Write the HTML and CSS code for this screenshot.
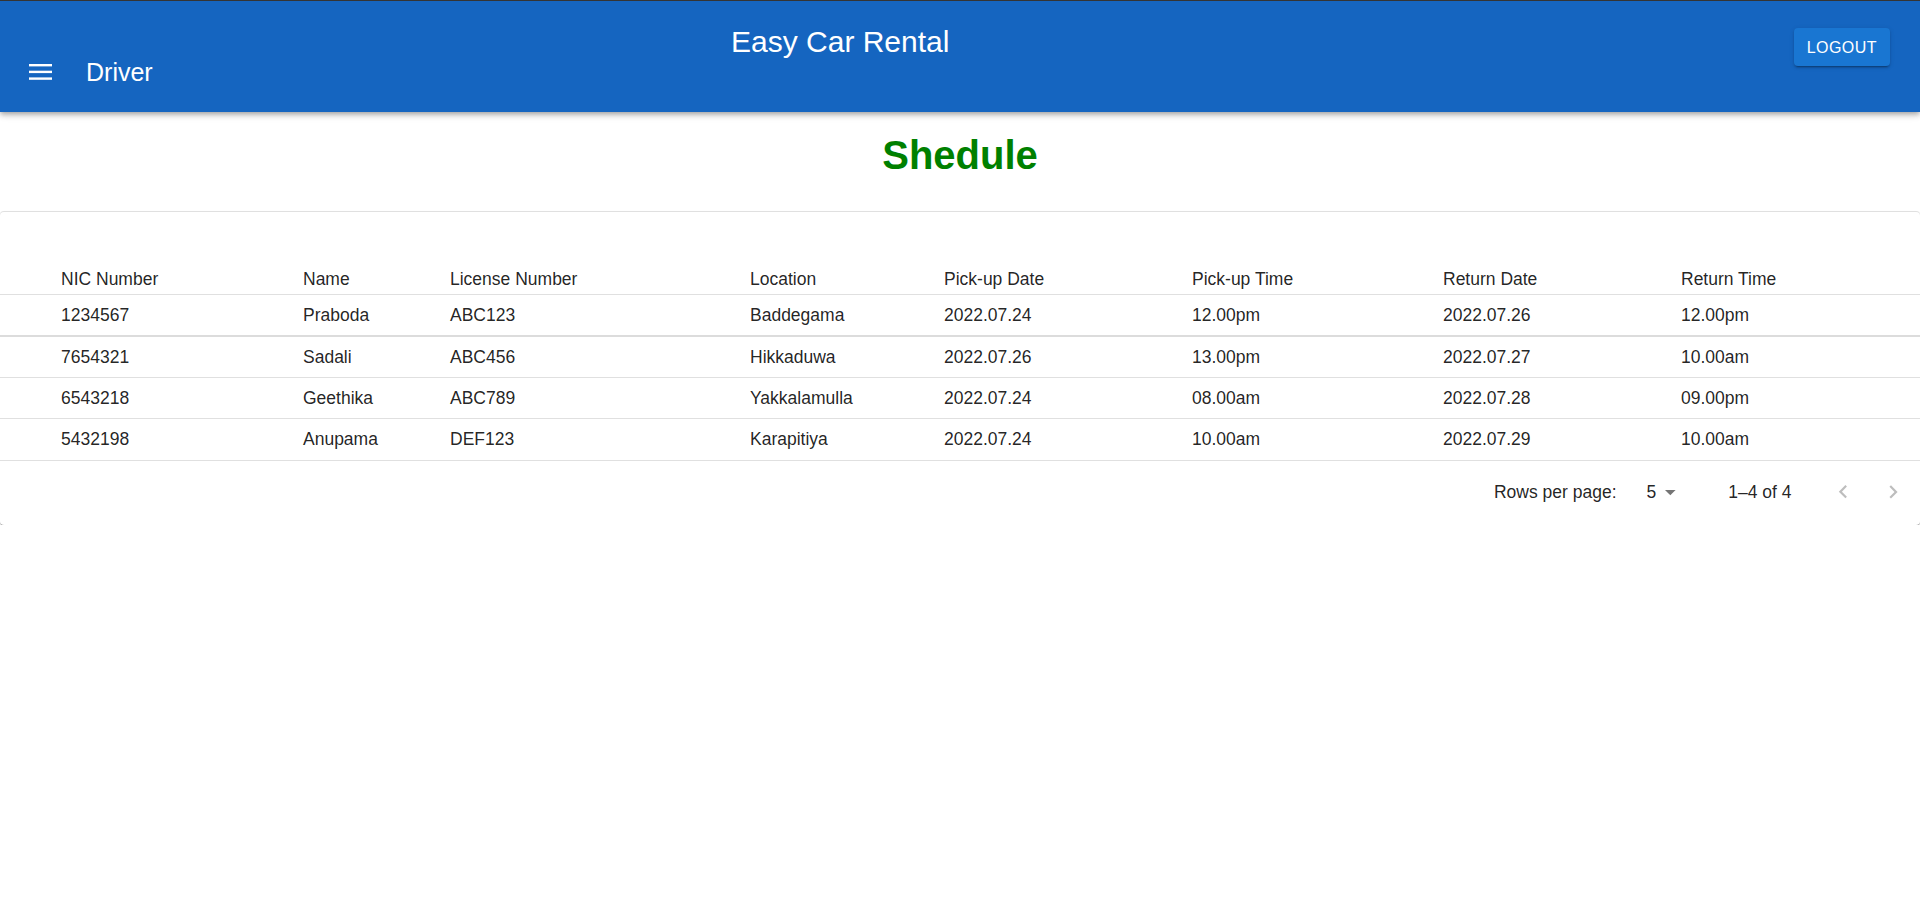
FILE: index.html
```html
<!DOCTYPE html>
<html lang="en">
<head>
<meta charset="utf-8">
<title>Easy Car Rental - Driver</title>
<link rel="stylesheet" href="styles.css">
</head>
<body>
<header class="appbar">
  <div class="appbar-left">
    <svg class="menu-icon" width="23" height="16" viewBox="0 0 23 16" aria-hidden="true">
      <rect x="0" y="0" width="23" height="2.4" fill="#fff"/>
      <rect x="0" y="6.7" width="23" height="2.4" fill="#fff"/>
      <rect x="0" y="13.4" width="23" height="2.4" fill="#fff"/>
    </svg>
    <span class="role">Driver</span>
  </div>
  <div class="brand">Easy Car Rental</div>
  <button class="logout" type="button">LOGOUT</button>
</header>

<main>
  <h1 class="page-title">Shedule</h1>
  <section class="paper">
    <table class="schedule">
      <colgroup>
        <col class="c1"><col class="c2"><col class="c3"><col class="c4">
        <col class="c5"><col class="c6"><col class="c7"><col class="c8">
      </colgroup>
      <thead>
        <tr>
          <th>NIC Number</th><th>Name</th><th>License Number</th><th>Location</th>
          <th>Pick-up Date</th><th>Pick-up Time</th><th>Return Date</th><th>Return Time</th>
        </tr>
      </thead>
      <tbody>
        <tr class="first">
          <td>1234567</td><td>Praboda</td><td>ABC123</td><td>Baddegama</td>
          <td>2022.07.24</td><td>12.00pm</td><td>2022.07.26</td><td>12.00pm</td>
        </tr>
        <tr>
          <td>7654321</td><td>Sadali</td><td>ABC456</td><td>Hikkaduwa</td>
          <td>2022.07.26</td><td>13.00pm</td><td>2022.07.27</td><td>10.00am</td>
        </tr>
        <tr>
          <td>6543218</td><td>Geethika</td><td>ABC789</td><td>Yakkalamulla</td>
          <td>2022.07.24</td><td>08.00am</td><td>2022.07.28</td><td>09.00pm</td>
        </tr>
        <tr>
          <td>5432198</td><td>Anupama</td><td>DEF123</td><td>Karapitiya</td>
          <td>2022.07.24</td><td>10.00am</td><td>2022.07.29</td><td>10.00am</td>
        </tr>
      </tbody>
    </table>
    <div class="pagination">
      <span class="rpp-label">Rows per page:</span>
      <span class="rpp-select">
        <span>5</span>
        <svg width="11" height="6" viewBox="0 0 11 6" aria-hidden="true"><polygon points="0,0 10.6,0 5.3,5.3" fill="#757575"/></svg>
      </span>
      <span class="range">1–4 of 4</span>
      <svg class="nav nav-prev" width="26.4" height="26.4" viewBox="0 0 24 24" aria-hidden="true"><path d="M15.41 16.09l-4.58-4.59 4.58-4.59L14 5.5l-6 6 6 6z" fill="rgba(0,0,0,0.26)"/></svg>
      <svg class="nav nav-next" width="26.4" height="26.4" viewBox="0 0 24 24" aria-hidden="true"><path d="M8.59 16.34l4.58-4.59-4.58-4.59L10 5.75l6 6-6 6z" fill="rgba(0,0,0,0.26)"/></svg>
    </div>
  </section>
</main>
</body>
</html>
```

FILE: styles.css
```css
* { box-sizing: border-box; }

html, body {
  margin: 0;
  padding: 0;
  background: #fff;
}

body {
  font-family: "Liberation Sans", Arial, Helvetica, sans-serif;
  color: rgba(0, 0, 0, 0.87);
}

/* App bar */
.appbar {
  position: relative;
  z-index: 2;
  display: grid;
  grid-template-columns: 731px 1fr auto;
  height: 112px;
  border-top: 1px solid #343434;
  background: #1565c0;
  color: #fff;
  box-shadow: 0 2px 4px -1px rgba(0,0,0,0.2), 0 4px 5px 0 rgba(0,0,0,0.14), 0 1px 10px 0 rgba(0,0,0,0.12);
}

.appbar-left {
  display: flex;
  align-items: flex-start;
  padding-left: 29px;
}

.menu-icon {
  display: block;
  margin-top: 63.3px;
}

.role {
  margin-left: 34px;
  margin-top: 56px;
  font-size: 25px;
  line-height: 30px;
}

.brand {
  margin-top: 22.8px;
  font-size: 30px;
  line-height: 36px;
  white-space: nowrap;
}

.logout {
  align-self: start;
  margin: 27px 30px 0 0;
  height: 38px;
  padding: 0 13px;
  border: none;
  border-radius: 4px;
  background: #1976d2;
  color: #fff;
  font-family: "Liberation Sans", Arial, sans-serif;
  font-size: 16px;
  letter-spacing: 0.45px;
  line-height: 39px;
  box-shadow: 0 3px 1px -2px rgba(0,0,0,0.2), 0 2px 2px 0 rgba(0,0,0,0.14), 0 1px 5px 0 rgba(0,0,0,0.12);
}

/* Title */
.page-title {
  margin: 0 0 33.5px;
  padding-top: 18.5px;
  font-size: 40px;
  line-height: 48px;
  font-weight: bold;
  text-align: center;
  color: #008000;
}

/* Paper with table */
.paper {
  padding-top: 46.5px;
  border-radius: 4px;
  background: #fff;
  box-shadow: 0 -1px 0 #e0e0e0, 0 1px 0 rgba(0,0,0,0.22), 0 2px 1px -1px rgba(0,0,0,0.25), 0 1px 3px 0 rgba(0,0,0,0.12);
}

.schedule {
  width: 100%;
  table-layout: fixed;
  border-collapse: collapse;
  font-size: 17.5px;
}

.c1 { width: 303px; }
.c2 { width: 147px; }
.c3 { width: 300px; }
.c4 { width: 194px; }
.c5 { width: 248px; }
.c6 { width: 251px; }
.c7 { width: 238px; }
.c8 { width: 239px; }

.schedule th,
.schedule td {
  padding: 8px 0;
  text-align: left;
  font-weight: normal;
  line-height: 24.3px;
  border-bottom: 1px solid #e0e0e0;
  white-space: nowrap;
}

.schedule th {
  padding: 8px 0 3px;
  line-height: 24px;
}

.schedule th:first-child,
.schedule td:first-child {
  padding-left: 61px;
}

.schedule tr.first td {
  border-bottom: 2px solid #dcdcdc;
}

/* Pagination */
.pagination {
  display: flex;
  align-items: center;
  justify-content: flex-end;
  height: 64px;
  padding-right: 13.7px;
  font-size: 17.5px;
}

.rpp-select {
  display: flex;
  align-items: center;
  gap: 9px;
  margin-left: 30px;
}

.rpp-select svg { display: block; }

.range {
  margin-left: 52px;
}

.nav { display: block; }

.nav-prev { margin-left: 38px; }

.nav-next { margin-left: 24px; }
```
